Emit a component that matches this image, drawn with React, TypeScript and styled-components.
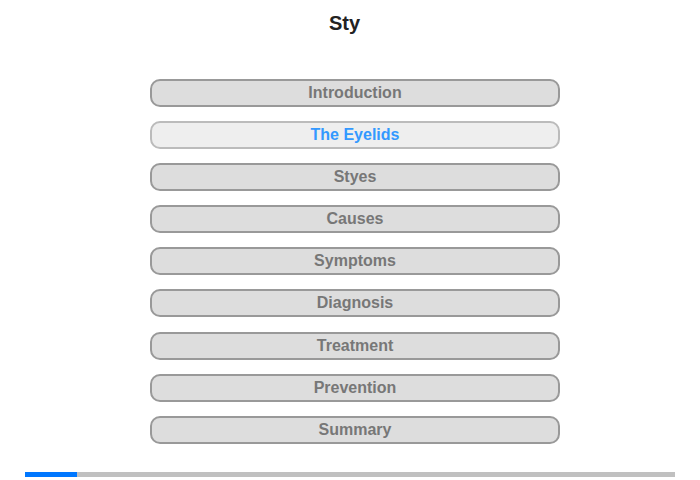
import React from "react";
import styled, { createGlobalStyle } from "styled-components";

const Global = createGlobalStyle`
  html, body { margin: 0; padding: 0; background: #fff; }
  body { font-family: "Liberation Sans", Arial, sans-serif; }
`;

const Page = styled.div`
  width: 700px;
  height: 480px;
  display: flex;
  flex-direction: column;
  align-items: center;
  box-sizing: border-box;
  padding-top: 11px;
`;

const Title = styled.h1`
  margin: 0 11px 0 0;
  font-size: 20px;
  line-height: 24px;
  font-weight: bold;
  color: #222;
`;

const Menu = styled.nav`
  margin: 44px 0 0 10px;
  display: flex;
  flex-direction: column;
  gap: 14.1px;
`;

const Item = styled.div<{ $active?: boolean }>`
  width: 410px;
  height: 28px;
  box-sizing: border-box;
  border: 2px solid ${(p) => (p.$active ? "#bbbbbb" : "#999999")};
  border-radius: 10px;
  background: ${(p) => (p.$active ? "#eeeeee" : "#dddddd")};
  color: ${(p) => (p.$active ? "#3399ff" : "#777777")};
  font-size: 16px;
  font-weight: bold;
  display: flex;
  align-items: center;
  justify-content: center;
  line-height: 1;
`;

const Progress = styled.div`
  margin-top: auto;
  margin-bottom: 3px;
  width: 650px;
  height: 5px;
  background: #c0c0c0;
  display: flex;
`;

const Fill = styled.div`
  height: 100%;
  background: #0077ff;
`;

const items = [
  "Introduction",
  "The Eyelids",
  "Styes",
  "Causes",
  "Symptoms",
  "Diagnosis",
  "Treatment",
  "Prevention",
  "Summary",
];

export default function App() {
  return (
    <>
      <Global />
      <Page>
        <Title>Sty</Title>
        <Menu>
          {items.map((t, i) => (
            <Item key={t} $active={i === 1}>
              {t}
            </Item>
          ))}
        </Menu>
        <Progress>
          <Fill style={{ width: `${(52 / 650) * 100}%` }} />
        </Progress>
      </Page>
    </>
  );
}
